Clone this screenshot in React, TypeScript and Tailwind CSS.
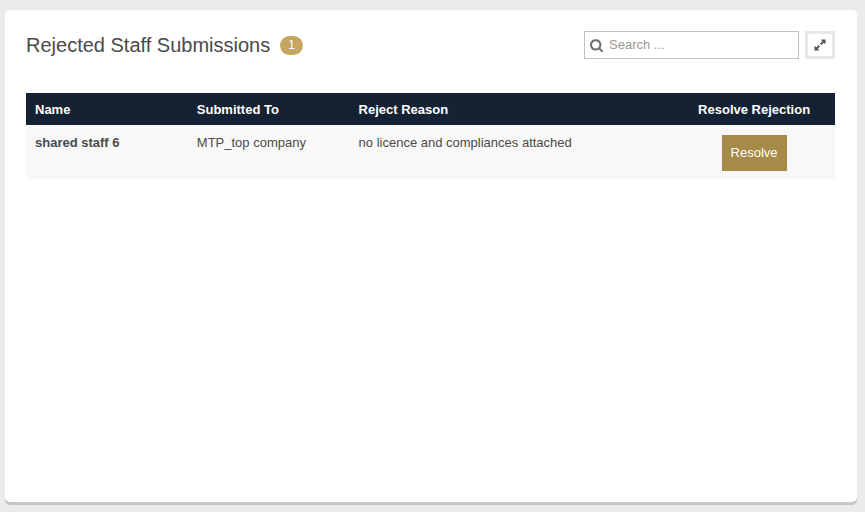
type Submission = {
  name: string;
  submittedTo: string;
  reason: string;
};

const SUBMISSIONS: Submission[] = [
  {
    name: "shared staff 6",
    submittedTo: "MTP_top company",
    reason: "no licence and compliances attached",
  },
];

function SearchIcon() {
  return (
    <svg viewBox="90 90 1600 1600" className="size-[13px] shrink-0 fill-[#707070]" aria-hidden="true">
      <path d="M1152 832q0-185-131.5-316.5t-316.5-131.5-316.5 131.5-131.5 316.5 131.5 316.5 316.5 131.5 316.5-131.5 131.5-316.5zm512 832q0 52-38 90t-90 38q-54 0-90-38l-343-342q-179 124-399 124-143 0-273.5-55.5t-225-150-150-225-55.5-273.5 55.5-273.5 150-225 225-150 273.5-55.5 273.5 55.5 225 150 150 225 55.5 273.5q0 220-124 399l343 343q37 37 37 90z" transform="translate(90 -20)" />
    </svg>
  );
}

function ExpandIcon() {
  return (
    <svg viewBox="0 0 12 12" className="size-3" aria-hidden="true">
      <path d="M7 .5h4.500V5L10.500 4.600 7.400 1.500zM5 11.500H.5V7L1.500 7.400 4.600 10.500z" fill="#555" />
      <path d="M10.300 1.700 6.600 5.400M5.400 6.600 1.700 10.300" fill="none" stroke="#555" strokeWidth="2" />
    </svg>
  );
}

export default function App() {
  return (
    <div className="flex min-h-screen bg-[#ebebeb] pt-[10px] pr-2 pb-[10px] pl-[5px] font-['Liberation_Sans',Arial,sans-serif] text-[#4a4a4a]">
      <main className="flex-1 rounded-[5px] bg-white pt-5 pr-[22px] pl-[21px] shadow-[0_3px_0_#c6c6c6]">
        {/* Title and tools */}
        <header className="flex items-center justify-between">
          <h1 className="flex items-center gap-[10px] text-[20px] leading-[30px]">
            Rejected Staff Submissions
            <span className="rounded-full bg-[#c4a562] px-2 text-[12px] leading-[19px] text-white">
              1
            </span>
          </h1>
          <div className="flex items-center gap-[6px]">
            <label className="flex h-[28px] w-[215px] items-center gap-[6px] border border-[#c2c2c2] px-[5px]">
              <SearchIcon />
              <input
                type="text"
                aria-label="Search"
                placeholder="Search ..."
                className="min-w-0 flex-1 text-[13px] outline-none placeholder:text-[#999]"
              />
            </label>
            <button
              type="button"
              aria-label="Expand"
              className="flex h-[28px] w-[30px] items-center justify-center border-3 border-[#e8e8e8] bg-white"
            >
              <ExpandIcon />
            </button>
          </div>
        </header>

        {/* Rejections */}
        <table className="mt-[33px] w-full table-fixed text-[13px] leading-4">
          <thead>
            <tr className="bg-[#142234] text-left text-white">
              <th className="w-1/5 px-[9px] pt-[9px] pb-[7px]">Name</th>
              <th className="w-1/5 px-[9px] pt-[9px] pb-[7px]">Submitted To</th>
              <th className="w-2/5 px-[9px] pt-[9px] pb-[7px]">Reject Reason</th>
              <th className="w-1/5 px-[9px] pt-[9px] pb-[7px] text-center">Resolve Rejection</th>
            </tr>
          </thead>
          <tbody>
            {SUBMISSIONS.map((item) => (
              <tr key={item.name} className="bg-[#f8f8f8] align-top">
                <td className="px-[9px] py-[10px] font-bold">{item.name}</td>
                <td className="px-[9px] py-[10px]">{item.submittedTo}</td>
                <td className="px-[9px] py-[10px]">{item.reason}</td>
                <td className="px-[9px] pt-[10px] pb-2 text-center">
                  <button type="button" className="mx-auto block bg-[#a68a47] px-[9px] py-[10px] text-white">
                    Resolve
                  </button>
                </td>
              </tr>
            ))}
          </tbody>
        </table>
      </main>
    </div>
  );
}
